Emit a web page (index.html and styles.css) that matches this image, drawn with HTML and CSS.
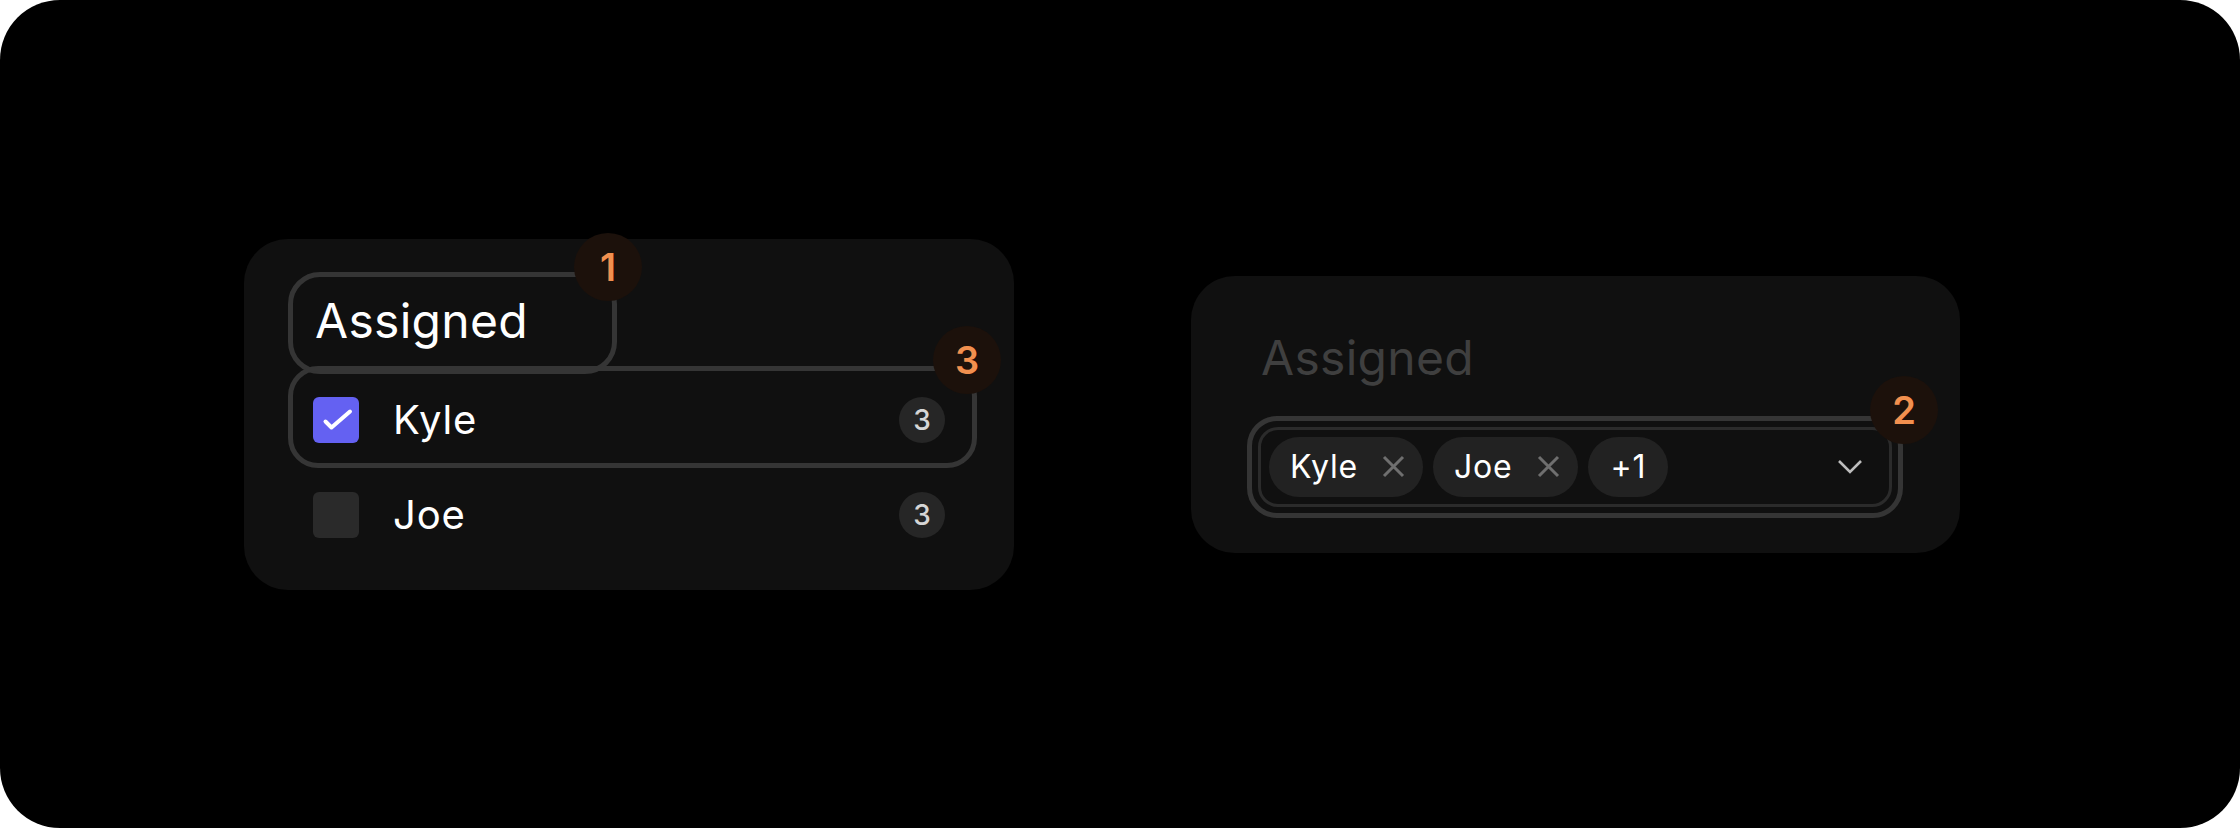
FILE: index.html
```html
<!DOCTYPE html>
<html lang="en">
<head>
<meta charset="utf-8">
<title>Assigned filter</title>
<link rel="stylesheet" href="styles.css">
</head>
<body>
<div class="frame">
  <section class="card card-list">
    <h2 class="title">Assigned</h2>
    <ul class="options">
      <li class="option">
        <span class="checkbox checked">
          <svg viewBox="0 0 46 46" width="46" height="46"><polyline points="12.5,24.5 18.5,30.5 37,14.5" fill="none" stroke="#fff" stroke-width="4" stroke-linecap="round" stroke-linejoin="round"/></svg>
        </span>
        <span class="name">Kyle</span>
        <span class="count">3</span>
      </li>
      <li class="option">
        <span class="checkbox"></span>
        <span class="name">Joe</span>
        <span class="count">3</span>
      </li>
    </ul>
    <div class="mark mark-title"></div>
    <div class="mark mark-row"></div>
    <span class="badge badge-1">1</span>
    <span class="badge badge-3">3</span>
  </section>

  <section class="card card-select">
    <h2 class="title muted">Assigned</h2>
    <div class="select">
      <span class="chip">Kyle
        <svg class="x" viewBox="0 0 23 23" width="23" height="23"><path d="M2 2L21 21M21 2L2 21" stroke="#6f6f6f" stroke-width="3" fill="none"/></svg>
      </span>
      <span class="chip">Joe
        <svg class="x" viewBox="0 0 23 23" width="23" height="23"><path d="M2 2L21 21M21 2L2 21" stroke="#6f6f6f" stroke-width="3" fill="none"/></svg>
      </span>
      <span class="chip chip-more">+1</span>
      <svg class="chevron" viewBox="0 0 26 15" width="26" height="15"><polyline points="2,2 13,13 24,2" fill="none" stroke="#bdbdbd" stroke-width="2.6"/></svg>
    </div>
    <div class="mark mark-select"></div>
    <span class="badge badge-2">2</span>
  </section>
</div>
</body>
</html>
```

FILE: styles.css
```css
* { box-sizing: border-box; }

html, body {
  margin: 0;
  padding: 0;
  background: #ffffff;
}

body {
  font-family: "Inter", "Liberation Sans", sans-serif;
  color: #ffffff;
}

.frame {
  width: 2240px;
  height: 828px;
  background: #000000;
  border-radius: 60px;
  display: flex;
  align-items: center;
  padding-left: 244px;
  gap: 177px;
}

.card {
  position: relative;
  background: #101010;
  border-radius: 44px;
  padding: 52px 69px 0 69px;
}

.card-list {
  width: 770px;
  height: 351px;
}

.card-select {
  width: 769px;
  height: 277px;
  padding-left: 67px;
  padding-right: 68px;
}

.title {
  margin: 0;
  font-size: 48px;
  line-height: 60px;
  font-weight: 400;
  color: #ffffff;
  padding-left: 2px;
  letter-spacing: 0.3px;
}

.title.muted {
  color: #3f3f3f;
  padding-left: 3px;
}

.options {
  list-style: none;
  margin: 22px 0 0 0;
  padding: 0;
}

.option {
  height: 95px;
  display: flex;
  align-items: center;
}

.checkbox {
  width: 46px;
  height: 46px;
  border-radius: 6px;
  background: #2a2a2a;
  flex: none;
  display: flex;
}

.checkbox.checked {
  background: #6461f2;
}

.name {
  margin-left: 34px;
  font-size: 40px;
  line-height: 48px;
  letter-spacing: 0.8px;
}

.count {
  margin-left: auto;
  width: 46px;
  height: 46px;
  border-radius: 50%;
  background: #262626;
  color: #d6d6d6;
  font-size: 28px;
  font-weight: 500;
  display: flex;
  align-items: center;
  justify-content: center;
}

.select {
  margin-top: 39px;
  height: 80px;
  border: 3px solid #2b2b2b;
  border-radius: 20px;
  display: flex;
  align-items: center;
  padding: 0 26px 0 8px;
  gap: 10px;
}

.chip {
  height: 60px;
  border-radius: 30px;
  background: #222222;
  display: flex;
  align-items: center;
  gap: 24px;
  padding: 0 18px 0 21px;
  font-size: 32px;
  letter-spacing: 0.8px;
  color: #ffffff;
}

.chip-more {
  padding: 0 22px 0 23px;
}

.x { display: block; }

.chevron {
  margin-left: auto;
  display: block;
}

.mark {
  position: absolute;
  border: 5px solid #353535;
  border-radius: 32px;
}

.mark-title {
  left: 44px;
  top: 33px;
  width: 329px;
  height: 102px;
}

.mark-row {
  left: 44px;
  top: 127px;
  width: 689px;
  height: 102px;
  border-radius: 30px;
}

.mark-select {
  left: 56px;
  top: 140px;
  width: 656px;
  height: 102px;
  border-radius: 30px;
}

.badge {
  position: absolute;
  width: 68px;
  height: 68px;
  border-radius: 50%;
  background: #1c110b;
  color: #f2904f;
  font-size: 38px;
  font-weight: 600;
  display: flex;
  align-items: center;
  justify-content: center;
}

.badge-1 { left: 330px; top: -6px; }
.badge-3 { left: 689px; top: 87px; }
.badge-2 { left: 679px; top: 100px; }
```
